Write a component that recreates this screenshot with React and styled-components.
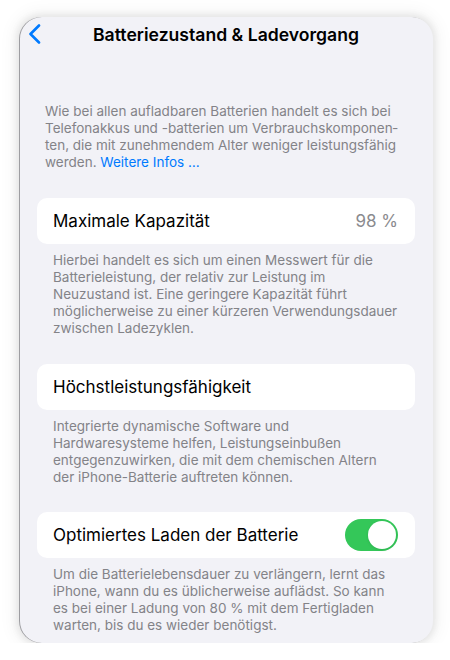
import styled, { createGlobalStyle } from 'styled-components';

const GlobalStyle = createGlobalStyle`
  body {
    margin: 0;
    background: #ffffff;
    font-family: Inter, "Noto Sans", "Liberation Sans", sans-serif;
    -webkit-font-smoothing: antialiased;
  }
`;

const Screen = styled.div`
  width: 414px;
  height: 626px;
  margin: 17px 0 0 19px;
  background: #f2f2f7;
  border-radius: 22px;
  overflow: hidden;
  box-shadow: 0 0 6px 3px rgba(0, 0, 0, 0.07), 0 0 16px 7px rgba(0, 0, 0, 0.04),
    inset 1px 0 0 rgba(0, 0, 0, 0.35);
  display: flex;
  flex-direction: column;
`;

const NavBar = styled.div`
  display: grid;
  grid-template-columns: 1fr auto 1fr;
  align-items: center;
  height: 34px;
  padding: 0 9px;
`;

const BackButton = styled.button`
  justify-self: start;
  display: flex;
  align-items: center;
  padding: 0;
  border: none;
  background: none;
  color: #007aff;
`;

const Title = styled.h1`
  margin: 0;
  font-size: 17.6px;
  font-weight: 600;
  color: #000000;
`;

const Intro = styled.p`
  margin: 52px 0 0;
  padding: 0 30px 0 26px;
  font-size: 13.5px;
  line-height: 17px;
  color: #838388;
`;

const Link = styled.a`
  color: #007aff;
  text-decoration: none;
`;

const Section = styled.section`
  margin-top: ${(p) => p.$gap}px;
  padding: 0 18px;
`;

const Card = styled.div`
  display: flex;
  align-items: center;
  justify-content: space-between;
  height: 46px;
  padding: 0 17px 0 16px;
  background: #ffffff;
  border-radius: 10px;
`;

const Label = styled.span`
  font-size: 17px;
  color: #000000;
`;

const Value = styled.span`
  font-size: 17px;
  color: #8a8a8e;
`;

const Footer = styled.p`
  margin: 0;
  padding: 8px 16px 0;
  font-size: 13.5px;
  line-height: 17px;
  color: #838388;
`;

const Toggle = styled.div`
  position: relative;
  width: 53px;
  height: 32px;
  border-radius: 16px;
  background: ${(p) => (p.$on ? '#34c759' : '#e9e9eb')};
`;

const Knob = styled.div`
  position: absolute;
  top: 2px;
  left: ${(p) => (p.$on ? 23 : 2)}px;
  width: 28px;
  height: 28px;
  border-radius: 50%;
  background: #ffffff;
  box-shadow: 0 1px 3px rgba(0, 0, 0, 0.1);
`;

function Chevron() {
  return (
    <svg width="14" height="20" viewBox="0 0 14 20" fill="none">
      <polyline
        points="11,1.5 2.5,10 11,18.5"
        stroke="currentColor"
        strokeWidth="2.6"
        strokeLinecap="round"
        strokeLinejoin="round"
      />
    </svg>
  );
}

export default function App() {
  return (
    <>
      <GlobalStyle />
      <Screen>
        <NavBar>
          <BackButton aria-label="Zurück">
            <Chevron />
          </BackButton>
          <Title>Batteriezustand &amp; Ladevorgang</Title>
          <span />
        </NavBar>
        <Intro>
          Wie bei allen aufladbaren Batterien handelt es sich bei Telefonakkus und -batterien um
          Verbrauchskomponen&shy;ten, die mit zunehmendem Alter weniger leistungsfähig werden.{' '}
          <Link href="#">Weitere Infos …</Link>
        </Intro>
        <Section $gap={27}>
          <Card>
            <Label>Maximale Kapazität</Label>
            <Value>98 %</Value>
          </Card>
          <Footer>
            Hierbei handelt es sich um einen Messwert für die Batterieleistung, der relativ zur
            Leistung im Neuzustand ist. Eine geringere Kapazität führt möglicherweise zu einer
            kürzeren Verwendungsdauer zwischen Ladezyklen.
          </Footer>
        </Section>
        <Section $gap={27}>
          <Card>
            <Label>Höchstleistungsfähigkeit</Label>
          </Card>
          <Footer>
            Integrierte dynamische Software und Hardwaresysteme helfen, Leistungseinbußen
            entgegenzuwirken, die mit dem chemischen Altern der iPhone-Batterie auftreten können.
          </Footer>
        </Section>
        <Section $gap={26}>
          <Card>
            <Label>Optimiertes Laden der Batterie</Label>
            <Toggle $on>
              <Knob $on />
            </Toggle>
          </Card>
          <Footer>
            Um die Batterielebensdauer zu verlängern, lernt das iPhone, wann du es üblicherweise
            auflädst. So kann es bei einer Ladung von 80 % mit dem Fertigladen warten, bis du es
            wieder benötigst.
          </Footer>
        </Section>
      </Screen>
    </>
  );
}
